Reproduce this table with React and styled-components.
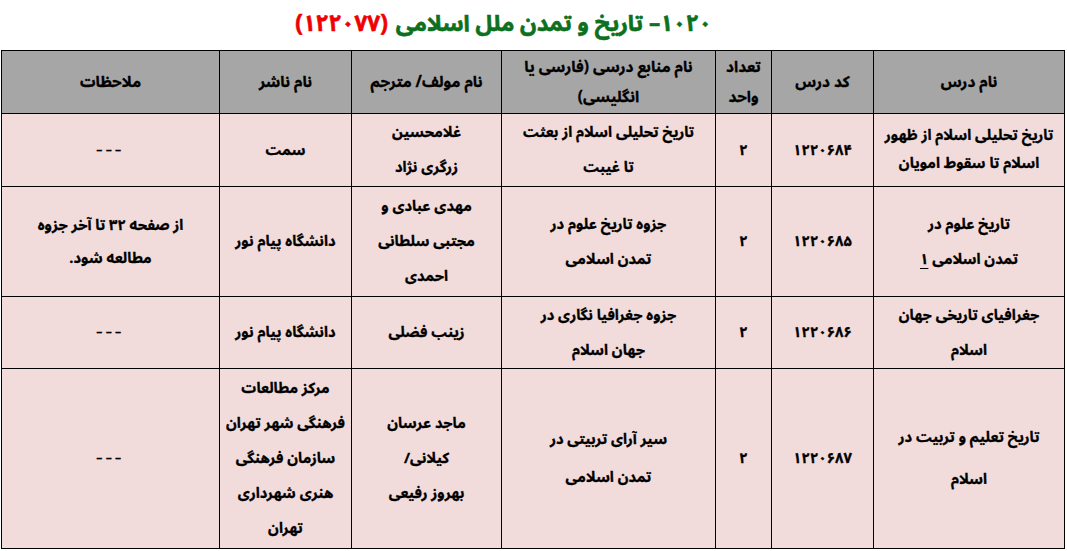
import React from "react";
import styled, { createGlobalStyle } from "styled-components";

const Global = createGlobalStyle`
  html, body { margin: 0; padding: 0; background: #ffffff; }
  body { font-family: "Noto Sans Arabic", "DejaVu Sans", "Noto Sans", sans-serif; color: #000; }
`;

const Page = styled.div`
  width: 1067px;
  height: 551px;
  direction: rtl;
  overflow: hidden;
`;

const Title = styled.h1`
  margin: 0;
  height: 48px;
  display: flex;
  align-items: center;
  justify-content: center;
  padding-right: 60px;
  font-size: 22.5px;
  font-weight: 700;
  white-space: nowrap;
  -webkit-text-stroke: 0.6px currentColor;
`;

const TitleGreen = styled.span`
  color: #0d7020;
`;

const TitleRed = styled.span`
  color: #f00000;
  margin-right: 8px;
`;

const Table = styled.table`
  width: 1063px;
  margin: 2px auto 0 1px;
  border-collapse: collapse;
  table-layout: fixed;
  font-size: 14.7px;
  font-weight: 700;
  -webkit-text-stroke: 0.3px #000;
`;

const Col = styled.col`
  width: ${(p) => p.$w}px;
`;

const HeadRow = styled.tr`
  height: ${(p) => p.$h}px;
  background: #a6a6a6;
`;

const Row = styled.tr`
  height: ${(p) => p.$h}px;
  background: #f2dcdb;
`;

const HeadCell = styled.th`
  border: 1.5px solid #000;
  text-align: center;
  vertical-align: middle;
  padding: 0 4px;
  line-height: 30px;
  font-size: 15.3px;
  font-weight: 700;
  white-space: nowrap;
`;

const Cell = styled.td`
  border: 1.5px solid #000;
  text-align: center;
  vertical-align: middle;
  padding: 0 3px;
  line-height: ${(p) => p.$lh || 35}px;
  white-space: nowrap;
`;

const Under = styled.span`
  text-decoration: underline;
  text-underline-offset: 4px;
`;

const Dashes = styled.span`
  display: inline-block;
  letter-spacing: 2px;
  transform: scaleX(1.4);
  font-weight: 400;
`;

const Lines = ({ items }) =>
  items.map((t, i) => (
    <React.Fragment key={i}>
      {i > 0 && <br />}
      {t}
    </React.Fragment>
  ));

const none = <Dashes>---</Dashes>;

const rows = [
  {
    h: 73,
    name: ["تاریخ تحلیلی اسلام از ظهور", "اسلام تا سقوط امویان"],
    nameLh: 28,
    code: "۱۲۲۰۶۸۴",
    units: "۲",
    src: ["تاریخ تحلیلی اسلام از بعثت", "تا غیبت"],
    author: ["غلامحسین", "زرگری نژاد"],
    pub: ["سمت"],
    note: [none],
  },
  {
    h: 110,
    name: ["تاریخ علوم در", <>تمدن اسلامی <Under>۱</Under></>],
    code: "۱۲۲۰۶۸۵",
    units: "۲",
    src: ["جزوه تاریخ علوم در", "تمدن اسلامی"],
    author: ["مهدی عبادی و", "مجتبی سلطانی", "احمدی"],
    pub: ["دانشگاه پیام نور"],
    note: ["از صفحه ۳۲ تا آخر جزوه", "مطالعه شود."],
    noteLh: 33,
  },
  {
    h: 72,
    name: ["جغرافیای تاریخی جهان", "اسلام"],
    code: "۱۲۲۰۶۸۶",
    units: "۲",
    src: ["جزوه جغرافیا نگاری در", "جهان اسلام"],
    author: ["زینب فضلی"],
    pub: ["دانشگاه پیام نور"],
    note: [none],
  },
  {
    h: 180,
    name: ["تاریخ تعلیم و تربیت در", "اسلام"],
    nameLh: 42,
    code: "۱۲۲۰۶۸۷",
    units: "۲",
    src: ["سیر آرای تربیتی در", "تمدن اسلامی"],
    srcLh: 38,
    author: ["ماجد عرسان", "کیلانی/", "بهروز رفیعی"],
    pub: ["مرکز مطالعات", "فرهنگی شهر تهران", "سازمان فرهنگی", "هنری شهرداری", "تهران"],
    note: [none],
  },
];

export default function App() {
  return (
    <>
      <Global />
      <Page>
        <Title>
          <TitleGreen>۱۰۲۰– تاریخ و تمدن ملل اسلامی</TitleGreen>
          <TitleRed>(۱۲۲۰۷۷)</TitleRed>
        </Title>
        <Table>
          <colgroup>
            <Col $w={191} />
            <Col $w={102} />
            <Col $w={56} />
            <Col $w={214} />
            <Col $w={150} />
            <Col $w={132} />
            <Col $w={218} />
          </colgroup>
          <thead>
            <HeadRow $h={63}>
              <HeadCell>نام درس</HeadCell>
              <HeadCell>کد درس</HeadCell>
              <HeadCell>
                <Lines items={["تعداد", "واحد"]} />
              </HeadCell>
              <HeadCell>
                <Lines items={["نام منابع درسی (فارسی یا", "انگلیسی)"]} />
              </HeadCell>
              <HeadCell>نام مولف/ مترجم</HeadCell>
              <HeadCell>نام ناشر</HeadCell>
              <HeadCell>ملاحظات</HeadCell>
            </HeadRow>
          </thead>
          <tbody>
            {rows.map((r, i) => (
              <Row key={i} $h={r.h}>
                <Cell $lh={r.nameLh}>
                  <Lines items={r.name} />
                </Cell>
                <Cell>{r.code}</Cell>
                <Cell>{r.units}</Cell>
                <Cell $lh={r.srcLh}>
                  <Lines items={r.src} />
                </Cell>
                <Cell>
                  <Lines items={r.author} />
                </Cell>
                <Cell>
                  <Lines items={r.pub} />
                </Cell>
                <Cell $lh={r.noteLh}>
                  <Lines items={r.note} />
                </Cell>
              </Row>
            ))}
          </tbody>
        </Table>
      </Page>
    </>
  );
}
